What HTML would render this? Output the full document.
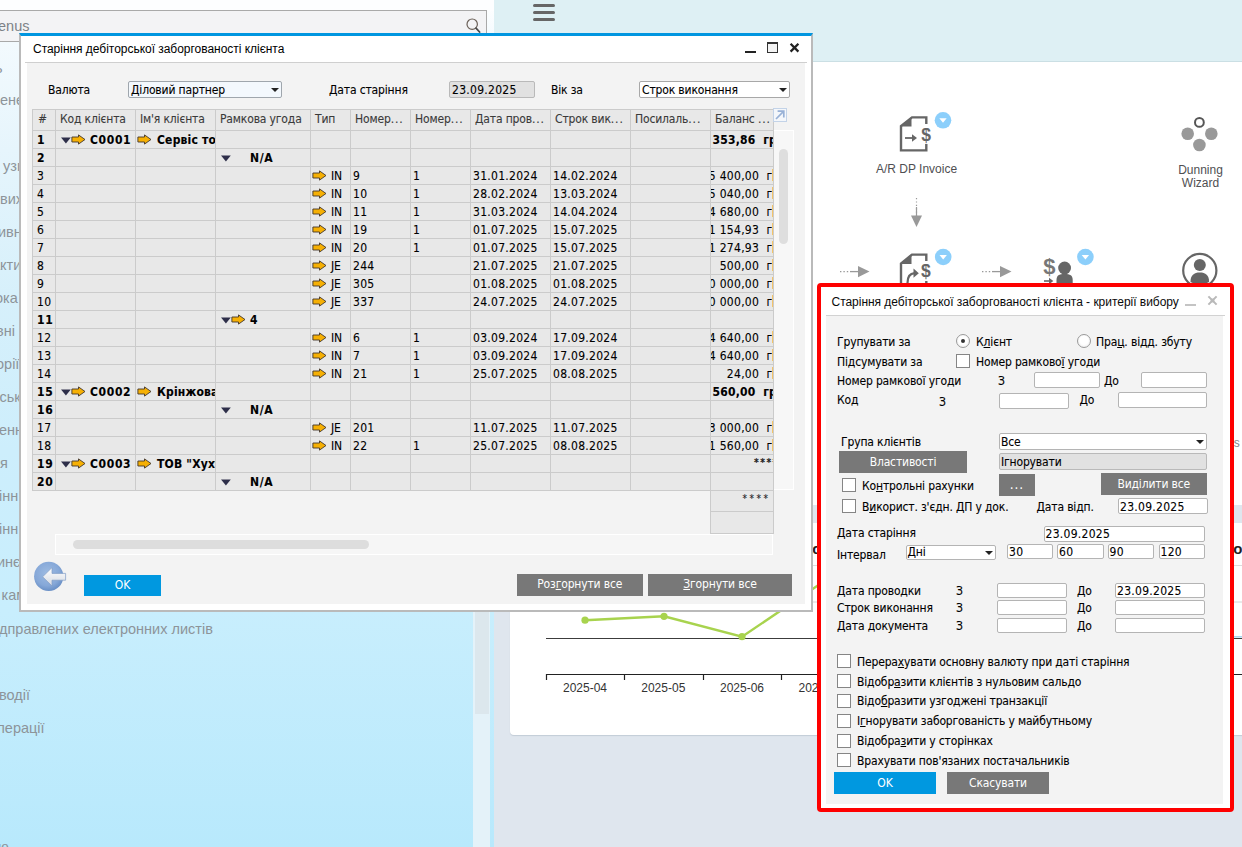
<!DOCTYPE html>
<html lang="uk">
<head>
<meta charset="utf-8">
<title>Старіння дебіторської заборгованості клієнта</title>
<style>
html,body{margin:0;padding:0;}
body{width:1242px;height:847px;position:relative;overflow:hidden;background:#dfe6ee;font-family:"DejaVu Sans Condensed","Liberation Sans",sans-serif;font-size:12px;color:#000;}
.abs,.abs *{position:absolute;box-sizing:border-box;}
.a{position:absolute;box-sizing:border-box;}
.t{position:absolute;white-space:nowrap;line-height:14px;font-size:12px;letter-spacing:-0.15px;-webkit-text-stroke:0.1px currentColor;}
.seg{font-family:"Liberation Sans",sans-serif;letter-spacing:-0.03px;-webkit-text-stroke:0 !important;color:#0a0a0a;}
.ari{font-family:"Liberation Sans",sans-serif;letter-spacing:0;}
u{text-decoration:underline;text-underline-offset:1px;}
/* left panel */
#left{left:0;top:0;width:494px;height:847px;background:linear-gradient(180deg,#ffffff 0px,#f3fafe 40px,#e6f5fc 150px,#d6f0fb 300px,#cdeefc 450px,#c8eefd 612px,#b8e9fc 847px);overflow:hidden;}
#left .mi{position:absolute;left:0;font-family:"Liberation Sans",sans-serif;font-size:14.5px;line-height:16px;color:#8d9499;white-space:nowrap;}
/* right panel */
#right{left:494px;top:0;width:748px;height:847px;background:#dfe6ee;overflow:hidden;}
/* dialogs */
.fld{position:absolute;box-sizing:border-box;background:#fff;border:1px solid #b4b4b4;border-radius:2px;font-size:12px;line-height:13px;padding:1.5px 0 0 2px;white-space:nowrap;overflow:hidden;-webkit-text-stroke:0.1px currentColor;letter-spacing:-0.15px;}
.fld.g{background:#e1e1e1;border-color:#b9b9b9;}
.btn{position:absolute;box-sizing:border-box;background:#787878;color:#fff;text-align:center;font-size:12px;line-height:21px;white-space:nowrap;letter-spacing:-0.15px;}
.btn.b{background:#0098e0;}
.cb{position:absolute;box-sizing:border-box;width:14px;height:14px;border:1px solid #858585;background:#fff;}
.rd{position:absolute;box-sizing:border-box;width:14px;height:14px;border:1px solid #9a9a9a;border-radius:50%;background:radial-gradient(circle at 50% 45%,#fff 45%,#e4e4e4 100%);}
.dd{position:absolute;width:0;height:0;border-left:4px solid transparent;border-right:4px solid transparent;border-top:4px solid #222;}

.c{background:#e8e8e8;overflow:hidden;}
.c .t{color:#000;}
.c .t.h{color:#3a3a3a;}
.bd{font-weight:bold;letter-spacing:0.2px;}
.n{letter-spacing:0.28px;}
.dots{letter-spacing:0.9px;}
.n2{letter-spacing:0.65px;}
</style>
</head>
<body>
<!-- LEFT PANEL -->
<div id="left" class="a">
<div class="a" style="left:0;top:0;width:494px;height:11px;background:#fdfeff"></div>
<div class="a" style="left:-5px;top:10px;width:492px;height:32px;background:#f3f3f5;border:1px solid #a9a9a9"></div>
<div class="a ari" style="left:-2px;top:17.5px;font-size:14.5px;line-height:16px;color:#7d8287;white-space:nowrap">enus</div>
<svg class="a" style="left:464px;top:15px" width="20" height="20" viewBox="0 0 20 20"><circle cx="8.2" cy="9.2" r="5.2" fill="none" stroke="#6b6058" stroke-width="1.2"/><path d="M12 13.2 L15.6 17" stroke="#4a4a4a" stroke-width="1.8" stroke-linecap="round"/></svg>
<div class="mi" style="left:-5px;top:60px;white-space:pre">ь</div>
<div class="mi" style="left:0px;top:92px;white-space:pre">ене</div>
<div class="mi" style="left:-1px;top:158px;white-space:pre"> узг</div>
<div class="mi" style="left:0px;top:191px;white-space:pre">вих</div>
<div class="mi" style="left:-2px;top:224px;white-space:pre">ивн</div>
<div class="mi" style="left:-8px;top:257px;white-space:pre">акти</div>
<div class="mi" style="left:-5px;top:290px;white-space:pre">ока</div>
<div class="mi" style="left:-4px;top:323px;white-space:pre">вні</div>
<div class="mi" style="left:-4px;top:356px;white-space:pre">орії</div>
<div class="mi" style="left:-0.5px;top:389px;white-space:pre">ськ</div>
<div class="mi" style="left:-1px;top:422px;white-space:pre">енн</div>
<div class="mi" style="left:0px;top:455px;white-space:pre">я</div>
<div class="mi" style="left:-1px;top:488px;white-space:pre">інн</div>
<div class="mi" style="left:-1px;top:521px;white-space:pre">інн</div>
<div class="mi" style="left:-3px;top:554px;white-space:pre">инє</div>
<div class="mi" style="left:-2.5px;top:587px;white-space:pre"> кам</div>
<div class="mi" style="left:-1px;top:621px;white-space:pre">дправлених електронних листів</div>
<div class="mi" style="left:-1px;top:687px;white-space:pre">водії</div>
<div class="mi" style="left:-3px;top:720px;white-space:pre">перації</div>
<div class="mi" style="left:-2px;top:839px;white-space:pre">ю</div>
<div class="a" style="left:473px;top:42px;width:17px;height:805px;background:#e4f2f9"></div>
<div class="a" style="left:475px;top:60px;width:13.5px;height:654px;background:#dce7ed"></div>
</div>
<!-- RIGHT PANEL -->
<div id="right" class="a">
<div class="a" style="left:0;top:0;width:748px;height:62px;background:#def0f4;border-bottom:1px solid #cbdfe4"></div>
<div class="a" style="left:39px;top:4px;width:22px;height:3px;border-radius:1.5px;background:#666"></div>
<div class="a" style="left:39px;top:11px;width:22px;height:3px;border-radius:1.5px;background:#666"></div>
<div class="a" style="left:39px;top:18px;width:22px;height:3px;border-radius:1.5px;background:#666"></div>
<div class="a" style="left:16px;top:62px;width:760px;height:442.5px;background:#fff;border-radius:0 0 4px 4px"></div>
<div class="a" style="left:16px;top:523px;width:760px;height:212px;background:#fff;border-radius:4px;box-shadow:0 1px 1px #c3ccd6"></div>
<!--R2-->
</div>
<!-- COCKPIT ICONS + CHART -->
<svg class="a" style="left:0;top:0" width="1242" height="847" viewBox="0 0 1242 847" font-family="Liberation Sans, sans-serif">
<!-- A/R DP Invoice icon -->
<g fill="none" stroke="#666" stroke-width="2.4">
<path d="M926.3 124 V117.4 H912 L901 126 V150.4 H926.3 V144"/>
</g>
<path d="M911.5 117 L911.5 126.5 L900.5 126.5 Z" fill="#666"/>
<path d="M905 138 H913" stroke="#666" stroke-width="1.8" fill="none"/>
<path d="M912 134.2 L917 138 L912 141.8 Z" fill="#666"/>
<text x="921.2" y="141" font-size="17.5" font-weight="bold" fill="#666">$</text>
<circle cx="943" cy="120.3" r="8.3" fill="#8ccffb"/>
<path d="M939.3 118.3 H946.7 L943 122.8 Z" fill="#fff"/>
<text x="916.5" y="172.6" font-size="12" fill="#4f4f52" text-anchor="middle">A/R DP Invoice</text>
<!-- down arrow -->
<path d="M916.5 198 V216" stroke="#999" stroke-width="1.2" stroke-dasharray="1.2 2.2" fill="none"/>
<path d="M916.5 207 V216" stroke="#999" stroke-width="1.2" fill="none"/>
<path d="M911 215.5 H922 L916.5 227 Z" fill="#999"/>
<!-- Dunning wizard -->
<circle cx="1199.4" cy="122.4" r="4.4" fill="#fff" stroke="#555" stroke-width="2"/>
<circle cx="1187.7" cy="133.7" r="6.3" fill="#999"/>
<circle cx="1211.3" cy="133.7" r="6.3" fill="#999"/>
<circle cx="1199.4" cy="145" r="6.3" fill="#999"/>
<text x="1200.5" y="173.5" font-size="12" fill="#4f4f52" text-anchor="middle">Dunning</text>
<text x="1200.5" y="186.9" font-size="12" fill="#4f4f52" text-anchor="middle">Wizard</text>
<!-- row 2 arrow 1 -->
<path d="M840 271.6 H850" stroke="#999" stroke-width="1.3" stroke-dasharray="1.4 2" fill="none"/>
<path d="M850 271.6 H859" stroke="#999" stroke-width="1.3" fill="none"/>
<path d="M858 266 L869.5 271.6 L858 277.2 Z" fill="#999"/>
<!-- doc icon 2 -->
<g fill="none" stroke="#666" stroke-width="2.4">
<path d="M926.3 261 V254.6 H912 L901 263.5 V290 M926.3 281 V290"/>
</g>
<path d="M911.5 254 L911.5 264 L900.5 264 Z" fill="#666"/>
<path d="M907.5 283 C907.5 277 910 273.5 914.5 273.2" stroke="#666" stroke-width="2.2" fill="none"/>
<path d="M913.5 268.6 L918.8 273.2 L913.5 277.8 Z" fill="#666"/>
<text x="921" y="277.4" font-size="17.5" font-weight="bold" fill="#666">$</text>
<circle cx="943.2" cy="257" r="8.3" fill="#8ccffb"/>
<path d="M939.5 255 H946.9 L943.2 259.5 Z" fill="#fff"/>
<!-- row 2 arrow 2 -->
<path d="M982 271.6 H992" stroke="#999" stroke-width="1.3" stroke-dasharray="1.4 2" fill="none"/>
<path d="M992 271.6 H1001" stroke="#999" stroke-width="1.3" fill="none"/>
<path d="M1000 266 L1011.5 271.6 L1000 277.2 Z" fill="#999"/>
<!-- $ person -->
<text x="1043.2" y="273.6" font-size="22" font-weight="bold" fill="#777">$</text>
<circle cx="1064.6" cy="268" r="6.4" fill="#666"/>
<path d="M1056.5 290 V280 C1056.5 275.5 1059 274 1064.6 274 C1070.2 274 1072.7 275.5 1072.7 280 V290 Z" fill="#666"/>
<path d="M1044 281 H1050" stroke="#666" stroke-width="1.6" fill="none"/>
<path d="M1049 277.8 L1053.3 281 L1049 284.2 Z" fill="#666"/>
<circle cx="1085.4" cy="257" r="8.3" fill="#8ccffb"/>
<path d="M1081.7 255 H1089.1 L1085.4 259.5 Z" fill="#fff"/>
<!-- person circle -->
<circle cx="1199.8" cy="270.5" r="16.6" fill="#fff" stroke="#666" stroke-width="2.2"/>
<circle cx="1199.8" cy="265" r="6" fill="#666"/>
<path d="M1190.5 282 C1190.5 275 1194 272.5 1199.8 272.5 C1205.6 272.5 1209.1 275 1209.1 282 C1206 284.5 1193.6 284.5 1190.5 282 Z" fill="#666"/>
<!-- fragments right of dialog -->
<text x="1233.8" y="446.5" font-size="12" fill="#7f8790">s</text>
<!-- chart card title -->
<text x="532" y="553.8" font-size="15" font-weight="bold" fill="#222">Аналіз продажів</text><text x="812.3" y="553.8" font-size="15" font-weight="bold" fill="#222">сума</text>
<text x="1233.2" y="553.8" font-size="15" font-weight="bold" fill="#222">о'</text>
<path d="M510 565.5 H1242" stroke="#dcdcdc" stroke-width="1"/>
<!-- chart -->
<path d="M546 602 H1242" stroke="#d4d4d4" stroke-width="1"/>
<path d="M546 638.5 H1242" stroke="#3c3c3c" stroke-width="1"/>
<path d="M1226 636.8 H1242" stroke="#9fd2ee" stroke-width="1.4"/>
<path d="M546 674.5 H1242" stroke="#222" stroke-width="1.2"/>
<path d="M546.5 674 V680 M624.5 674 V680 M703.5 674 V680 M781.5 674 V680" stroke="#222" stroke-width="1.2"/>
<g font-size="12" fill="#333" text-anchor="middle">
<text x="585" y="692">2025-04</text><text x="663.3" y="692">2025-05</text><text x="742" y="692">2025-06</text><text x="820.5" y="692">2025-07</text>
</g>
<path d="M585 620.2 L664 616.3 L742 636.7 L820 584" stroke="#a8d34e" stroke-width="2.4" fill="none"/>
<circle cx="585" cy="620.2" r="3.6" fill="#a8d34e"/><circle cx="664" cy="616.3" r="3.6" fill="#a8d34e"/><circle cx="742" cy="636.7" r="3.6" fill="#a8d34e"/>
</svg>
<!-- MAIN DIALOG -->
<div id="dlg1" class="a">
<div class="a" style="left:19px;top:33px;width:794px;height:579px;background:#fff;border:2px solid #bababa;border-top:3px solid #0096e0;"></div>
<div class="a" style="left:25px;top:62px;width:782px;height:1px;background:#cfcfcf"></div>
<div class="a" style="left:27px;top:63px;width:778px;height:541px;background:#f3f3f3"></div>
<div class="t seg" style="left:33px;top:41.5px;font-size:12px;color:#000">Старіння дебіторської заборгованості клієнта</div>
<div class="a" style="left:745px;top:51px;width:11px;height:2px;background:#222"></div>
<div class="a" style="left:767px;top:42px;width:11px;height:11px;border:1px solid #333;border-top:2px solid #333;background:#f3f3f3"></div>
<svg class="a" style="left:789px;top:42px" width="11" height="11" viewBox="0 0 11 11"><path d="M1.6 1.8 L9.4 9.6 M9.4 1.8 L1.6 9.6" stroke="#222" stroke-width="2.3" fill="none"/></svg>
<div class="t" style="left:48px;top:83px">Валюта</div>
<div class="fld" style="left:128px;top:81px;width:154px;height:16.6px;border-color:#9fa6ad;background:#f3f8fd">Діловий партнер</div><div class="dd" style="left:271px;top:88px"></div>
<div class="t" style="left:329px;top:83px">Дата старіння</div>
<div class="fld g" style="left:449px;top:81px;width:86px;height:16.6px"><span class="n">23.09.2025</span></div>
<div class="t" style="left:551px;top:83px">Вік за</div>
<div class="fld" style="left:639px;top:81px;width:151px;height:16.6px;border-color:#a8a8a8">Строк виконання</div><div class="dd" style="left:779px;top:88px"></div>
<div class="a" style="left:32px;top:109px;width:742px;height:382px;background:#cbcbcb"></div>
<div class="a c" style="left:33px;top:110px;width:22px;height:20px;"><span class="t h" style="left:5px;top:2px">#</span></div>
<div class="a c" style="left:56px;top:110px;width:79px;height:20px;"><span class="t h" style="left:4px;top:2px">Код клієнта</span></div>
<div class="a c" style="left:136px;top:110px;width:79px;height:20px;"><span class="t h" style="left:4px;top:2px">Ім'я клієнта</span></div>
<div class="a c" style="left:216px;top:110px;width:94px;height:20px;"><span class="t h" style="left:4px;top:2px">Рамкова угода</span></div>
<div class="a c" style="left:311px;top:110px;width:39px;height:20px;"><span class="t h" style="left:4px;top:2px">Тип</span></div>
<div class="a c" style="left:351px;top:110px;width:59px;height:20px;"><span class="t h" style="left:4px;top:2px">Номер<span class="dots">...</span></span></div>
<div class="a c" style="left:411px;top:110px;width:59px;height:20px;"><span class="t h" style="left:4px;top:2px">Номер<span class="dots">...</span></span></div>
<div class="a c" style="left:471px;top:110px;width:79px;height:20px;"><span class="t h" style="left:4px;top:2px">Дата пров<span class="dots">...</span></span></div>
<div class="a c" style="left:551px;top:110px;width:79px;height:20px;"><span class="t h" style="left:4px;top:2px">Строк вик<span class="dots">...</span></span></div>
<div class="a c" style="left:631px;top:110px;width:79px;height:20px;"><span class="t h" style="left:4px;top:2px">Посилаль<span class="dots">...</span></span></div>
<div class="a c" style="left:711px;top:110px;width:62px;height:20px;"><span class="t h" style="left:4px;top:2px">Баланс <span class="dots">...</span></span></div>
<div class="a c" style="left:33px;top:131px;width:22px;height:17px;"><span class="t bd n2" style="left:4px;top:1.5px">1</span></div>
<div class="a c" style="left:56px;top:131px;width:79px;height:17px;"><svg class="a" style="left:5px;top:6px" width="10" height="7" viewBox="0 0 10 7"><path d="M0 0.4 H9.8 L4.9 6.6 Z" fill="#2e2f4a"/></svg><svg class="a" style="left:15.2px;top:3px" width="15" height="11" viewBox="0 0 15 11"><path d="M0.9 3 H7.5 V0.9 L14 5.5 L7.5 10.1 V8 H0.9 Z" fill="#f6b004" stroke="#43372a" stroke-width="0.9" stroke-linejoin="miter"/></svg><span class="t bd n2" style="left:34px;top:1.5px">C0001</span></div>
<div class="a c" style="left:136px;top:131px;width:79px;height:17px;"><svg class="a" style="left:1px;top:3px" width="15" height="11" viewBox="0 0 15 11"><path d="M0.9 3 H7.5 V0.9 L14 5.5 L7.5 10.1 V8 H0.9 Z" fill="#f6b004" stroke="#43372a" stroke-width="0.9" stroke-linejoin="miter"/></svg><span class="t bd" style="left:21px;top:1.5px">Сервіс то</span></div>
<div class="a c" style="left:216px;top:131px;width:94px;height:17px;"></div>
<div class="a c" style="left:311px;top:131px;width:39px;height:17px;"></div>
<div class="a c" style="left:351px;top:131px;width:59px;height:17px;"></div>
<div class="a c" style="left:411px;top:131px;width:59px;height:17px;"></div>
<div class="a c" style="left:471px;top:131px;width:79px;height:17px;"></div>
<div class="a c" style="left:551px;top:131px;width:79px;height:17px;"></div>
<div class="a c" style="left:631px;top:131px;width:79px;height:17px;"></div>
<div class="a c" style="left:711px;top:131px;width:62px;height:17px;"><span class="t bd" style="left:1.5px;top:1.5px">353,86&nbsp;&nbsp;грн</span></div>
<div class="a c" style="left:33px;top:149px;width:22px;height:17px;"><span class="t bd n2" style="left:4px;top:1.5px">2</span></div>
<div class="a c" style="left:56px;top:149px;width:79px;height:17px;"></div>
<div class="a c" style="left:136px;top:149px;width:79px;height:17px;"></div>
<div class="a c" style="left:216px;top:149px;width:94px;height:17px;"><svg class="a" style="left:5px;top:6px" width="10" height="7" viewBox="0 0 10 7"><path d="M0 0.4 H9.8 L4.9 6.6 Z" fill="#2e2f4a"/></svg><span class="t bd n2" style="left:34px;top:1.5px">N/A</span></div>
<div class="a c" style="left:311px;top:149px;width:39px;height:17px;"></div>
<div class="a c" style="left:351px;top:149px;width:59px;height:17px;"></div>
<div class="a c" style="left:411px;top:149px;width:59px;height:17px;"></div>
<div class="a c" style="left:471px;top:149px;width:79px;height:17px;"></div>
<div class="a c" style="left:551px;top:149px;width:79px;height:17px;"></div>
<div class="a c" style="left:631px;top:149px;width:79px;height:17px;"></div>
<div class="a c" style="left:711px;top:149px;width:62px;height:17px;"></div>
<div class="a c" style="left:33px;top:167px;width:22px;height:17px;"><span class="t n" style="left:4px;top:1.5px">3</span></div>
<div class="a c" style="left:56px;top:167px;width:79px;height:17px;"></div>
<div class="a c" style="left:136px;top:167px;width:79px;height:17px;"></div>
<div class="a c" style="left:216px;top:167px;width:94px;height:17px;"></div>
<div class="a c" style="left:311px;top:167px;width:39px;height:17px;"><svg class="a" style="left:1px;top:3px" width="15" height="11" viewBox="0 0 15 11"><path d="M0.9 3 H7.5 V0.9 L14 5.5 L7.5 10.1 V8 H0.9 Z" fill="#f6b004" stroke="#43372a" stroke-width="0.9" stroke-linejoin="miter"/></svg><span class="t" style="left:20px;top:1.5px">IN</span></div>
<div class="a c" style="left:351px;top:167px;width:59px;height:17px;"><span class="t n" style="left:2px;top:1.5px">9</span></div>
<div class="a c" style="left:411px;top:167px;width:59px;height:17px;"><span class="t n" style="left:2px;top:1.5px">1</span></div>
<div class="a c" style="left:471px;top:167px;width:79px;height:17px;"><span class="t n" style="left:2px;top:1.5px">31.01.2024</span></div>
<div class="a c" style="left:551px;top:167px;width:79px;height:17px;"><span class="t n" style="left:2px;top:1.5px">14.02.2024</span></div>
<div class="a c" style="left:631px;top:167px;width:79px;height:17px;"></div>
<div class="a c" style="left:711px;top:167px;width:62px;height:17px;"><span class="t n" style="right:-14px;top:1.5px">15 400,00&nbsp;&nbsp;грн</span><span class="a" style="right:0;top:2px;width:1px;height:12px;background:#f3c46a"></span></div>
<div class="a c" style="left:33px;top:185px;width:22px;height:17px;"><span class="t n" style="left:4px;top:1.5px">4</span></div>
<div class="a c" style="left:56px;top:185px;width:79px;height:17px;"></div>
<div class="a c" style="left:136px;top:185px;width:79px;height:17px;"></div>
<div class="a c" style="left:216px;top:185px;width:94px;height:17px;"></div>
<div class="a c" style="left:311px;top:185px;width:39px;height:17px;"><svg class="a" style="left:1px;top:3px" width="15" height="11" viewBox="0 0 15 11"><path d="M0.9 3 H7.5 V0.9 L14 5.5 L7.5 10.1 V8 H0.9 Z" fill="#f6b004" stroke="#43372a" stroke-width="0.9" stroke-linejoin="miter"/></svg><span class="t" style="left:20px;top:1.5px">IN</span></div>
<div class="a c" style="left:351px;top:185px;width:59px;height:17px;"><span class="t n" style="left:2px;top:1.5px">10</span></div>
<div class="a c" style="left:411px;top:185px;width:59px;height:17px;"><span class="t n" style="left:2px;top:1.5px">1</span></div>
<div class="a c" style="left:471px;top:185px;width:79px;height:17px;"><span class="t n" style="left:2px;top:1.5px">28.02.2024</span></div>
<div class="a c" style="left:551px;top:185px;width:79px;height:17px;"><span class="t n" style="left:2px;top:1.5px">13.03.2024</span></div>
<div class="a c" style="left:631px;top:185px;width:79px;height:17px;"></div>
<div class="a c" style="left:711px;top:185px;width:62px;height:17px;"><span class="t n" style="right:-14px;top:1.5px">15 040,00&nbsp;&nbsp;грн</span><span class="a" style="right:0;top:2px;width:1px;height:12px;background:#f3c46a"></span></div>
<div class="a c" style="left:33px;top:203px;width:22px;height:17px;"><span class="t n" style="left:4px;top:1.5px">5</span></div>
<div class="a c" style="left:56px;top:203px;width:79px;height:17px;"></div>
<div class="a c" style="left:136px;top:203px;width:79px;height:17px;"></div>
<div class="a c" style="left:216px;top:203px;width:94px;height:17px;"></div>
<div class="a c" style="left:311px;top:203px;width:39px;height:17px;"><svg class="a" style="left:1px;top:3px" width="15" height="11" viewBox="0 0 15 11"><path d="M0.9 3 H7.5 V0.9 L14 5.5 L7.5 10.1 V8 H0.9 Z" fill="#f6b004" stroke="#43372a" stroke-width="0.9" stroke-linejoin="miter"/></svg><span class="t" style="left:20px;top:1.5px">IN</span></div>
<div class="a c" style="left:351px;top:203px;width:59px;height:17px;"><span class="t n" style="left:2px;top:1.5px">11</span></div>
<div class="a c" style="left:411px;top:203px;width:59px;height:17px;"><span class="t n" style="left:2px;top:1.5px">1</span></div>
<div class="a c" style="left:471px;top:203px;width:79px;height:17px;"><span class="t n" style="left:2px;top:1.5px">31.03.2024</span></div>
<div class="a c" style="left:551px;top:203px;width:79px;height:17px;"><span class="t n" style="left:2px;top:1.5px">14.04.2024</span></div>
<div class="a c" style="left:631px;top:203px;width:79px;height:17px;"></div>
<div class="a c" style="left:711px;top:203px;width:62px;height:17px;"><span class="t n" style="right:-14px;top:1.5px">14 680,00&nbsp;&nbsp;грн</span><span class="a" style="right:0;top:2px;width:1px;height:12px;background:#f3c46a"></span></div>
<div class="a c" style="left:33px;top:221px;width:22px;height:17px;"><span class="t n" style="left:4px;top:1.5px">6</span></div>
<div class="a c" style="left:56px;top:221px;width:79px;height:17px;"></div>
<div class="a c" style="left:136px;top:221px;width:79px;height:17px;"></div>
<div class="a c" style="left:216px;top:221px;width:94px;height:17px;"></div>
<div class="a c" style="left:311px;top:221px;width:39px;height:17px;"><svg class="a" style="left:1px;top:3px" width="15" height="11" viewBox="0 0 15 11"><path d="M0.9 3 H7.5 V0.9 L14 5.5 L7.5 10.1 V8 H0.9 Z" fill="#f6b004" stroke="#43372a" stroke-width="0.9" stroke-linejoin="miter"/></svg><span class="t" style="left:20px;top:1.5px">IN</span></div>
<div class="a c" style="left:351px;top:221px;width:59px;height:17px;"><span class="t n" style="left:2px;top:1.5px">19</span></div>
<div class="a c" style="left:411px;top:221px;width:59px;height:17px;"><span class="t n" style="left:2px;top:1.5px">1</span></div>
<div class="a c" style="left:471px;top:221px;width:79px;height:17px;"><span class="t n" style="left:2px;top:1.5px">01.07.2025</span></div>
<div class="a c" style="left:551px;top:221px;width:79px;height:17px;"><span class="t n" style="left:2px;top:1.5px">15.07.2025</span></div>
<div class="a c" style="left:631px;top:221px;width:79px;height:17px;"></div>
<div class="a c" style="left:711px;top:221px;width:62px;height:17px;"><span class="t n" style="right:-14px;top:1.5px">11 154,93&nbsp;&nbsp;грн</span><span class="a" style="right:0;top:2px;width:1px;height:12px;background:#f3c46a"></span></div>
<div class="a c" style="left:33px;top:239px;width:22px;height:17px;"><span class="t n" style="left:4px;top:1.5px">7</span></div>
<div class="a c" style="left:56px;top:239px;width:79px;height:17px;"></div>
<div class="a c" style="left:136px;top:239px;width:79px;height:17px;"></div>
<div class="a c" style="left:216px;top:239px;width:94px;height:17px;"></div>
<div class="a c" style="left:311px;top:239px;width:39px;height:17px;"><svg class="a" style="left:1px;top:3px" width="15" height="11" viewBox="0 0 15 11"><path d="M0.9 3 H7.5 V0.9 L14 5.5 L7.5 10.1 V8 H0.9 Z" fill="#f6b004" stroke="#43372a" stroke-width="0.9" stroke-linejoin="miter"/></svg><span class="t" style="left:20px;top:1.5px">IN</span></div>
<div class="a c" style="left:351px;top:239px;width:59px;height:17px;"><span class="t n" style="left:2px;top:1.5px">20</span></div>
<div class="a c" style="left:411px;top:239px;width:59px;height:17px;"><span class="t n" style="left:2px;top:1.5px">1</span></div>
<div class="a c" style="left:471px;top:239px;width:79px;height:17px;"><span class="t n" style="left:2px;top:1.5px">01.07.2025</span></div>
<div class="a c" style="left:551px;top:239px;width:79px;height:17px;"><span class="t n" style="left:2px;top:1.5px">15.07.2025</span></div>
<div class="a c" style="left:631px;top:239px;width:79px;height:17px;"></div>
<div class="a c" style="left:711px;top:239px;width:62px;height:17px;"><span class="t n" style="right:-14px;top:1.5px">11 274,93&nbsp;&nbsp;грн</span><span class="a" style="right:0;top:2px;width:1px;height:12px;background:#f3c46a"></span></div>
<div class="a c" style="left:33px;top:257px;width:22px;height:17px;"><span class="t n" style="left:4px;top:1.5px">8</span></div>
<div class="a c" style="left:56px;top:257px;width:79px;height:17px;"></div>
<div class="a c" style="left:136px;top:257px;width:79px;height:17px;"></div>
<div class="a c" style="left:216px;top:257px;width:94px;height:17px;"></div>
<div class="a c" style="left:311px;top:257px;width:39px;height:17px;"><svg class="a" style="left:1px;top:3px" width="15" height="11" viewBox="0 0 15 11"><path d="M0.9 3 H7.5 V0.9 L14 5.5 L7.5 10.1 V8 H0.9 Z" fill="#f6b004" stroke="#43372a" stroke-width="0.9" stroke-linejoin="miter"/></svg><span class="t" style="left:20px;top:1.5px">JE</span></div>
<div class="a c" style="left:351px;top:257px;width:59px;height:17px;"><span class="t n" style="left:2px;top:1.5px">244</span></div>
<div class="a c" style="left:411px;top:257px;width:59px;height:17px;"><span class="t" style="left:2px;top:1.5px"></span></div>
<div class="a c" style="left:471px;top:257px;width:79px;height:17px;"><span class="t n" style="left:2px;top:1.5px">21.07.2025</span></div>
<div class="a c" style="left:551px;top:257px;width:79px;height:17px;"><span class="t n" style="left:2px;top:1.5px">21.07.2025</span></div>
<div class="a c" style="left:631px;top:257px;width:79px;height:17px;"></div>
<div class="a c" style="left:711px;top:257px;width:62px;height:17px;"><span class="t n" style="right:-14px;top:1.5px">500,00&nbsp;&nbsp;грн</span><span class="a" style="right:0;top:2px;width:1px;height:12px;background:#f3c46a"></span></div>
<div class="a c" style="left:33px;top:275px;width:22px;height:17px;"><span class="t n" style="left:4px;top:1.5px">9</span></div>
<div class="a c" style="left:56px;top:275px;width:79px;height:17px;"></div>
<div class="a c" style="left:136px;top:275px;width:79px;height:17px;"></div>
<div class="a c" style="left:216px;top:275px;width:94px;height:17px;"></div>
<div class="a c" style="left:311px;top:275px;width:39px;height:17px;"><svg class="a" style="left:1px;top:3px" width="15" height="11" viewBox="0 0 15 11"><path d="M0.9 3 H7.5 V0.9 L14 5.5 L7.5 10.1 V8 H0.9 Z" fill="#f6b004" stroke="#43372a" stroke-width="0.9" stroke-linejoin="miter"/></svg><span class="t" style="left:20px;top:1.5px">JE</span></div>
<div class="a c" style="left:351px;top:275px;width:59px;height:17px;"><span class="t n" style="left:2px;top:1.5px">305</span></div>
<div class="a c" style="left:411px;top:275px;width:59px;height:17px;"><span class="t" style="left:2px;top:1.5px"></span></div>
<div class="a c" style="left:471px;top:275px;width:79px;height:17px;"><span class="t n" style="left:2px;top:1.5px">01.08.2025</span></div>
<div class="a c" style="left:551px;top:275px;width:79px;height:17px;"><span class="t n" style="left:2px;top:1.5px">01.08.2025</span></div>
<div class="a c" style="left:631px;top:275px;width:79px;height:17px;"></div>
<div class="a c" style="left:711px;top:275px;width:62px;height:17px;"><span class="t n" style="right:-14px;top:1.5px">10 000,00&nbsp;&nbsp;грн</span><span class="a" style="right:0;top:2px;width:1px;height:12px;background:#f3c46a"></span></div>
<div class="a c" style="left:33px;top:293px;width:22px;height:17px;"><span class="t n" style="left:4px;top:1.5px">10</span></div>
<div class="a c" style="left:56px;top:293px;width:79px;height:17px;"></div>
<div class="a c" style="left:136px;top:293px;width:79px;height:17px;"></div>
<div class="a c" style="left:216px;top:293px;width:94px;height:17px;"></div>
<div class="a c" style="left:311px;top:293px;width:39px;height:17px;"><svg class="a" style="left:1px;top:3px" width="15" height="11" viewBox="0 0 15 11"><path d="M0.9 3 H7.5 V0.9 L14 5.5 L7.5 10.1 V8 H0.9 Z" fill="#f6b004" stroke="#43372a" stroke-width="0.9" stroke-linejoin="miter"/></svg><span class="t" style="left:20px;top:1.5px">JE</span></div>
<div class="a c" style="left:351px;top:293px;width:59px;height:17px;"><span class="t n" style="left:2px;top:1.5px">337</span></div>
<div class="a c" style="left:411px;top:293px;width:59px;height:17px;"><span class="t" style="left:2px;top:1.5px"></span></div>
<div class="a c" style="left:471px;top:293px;width:79px;height:17px;"><span class="t n" style="left:2px;top:1.5px">24.07.2025</span></div>
<div class="a c" style="left:551px;top:293px;width:79px;height:17px;"><span class="t n" style="left:2px;top:1.5px">24.07.2025</span></div>
<div class="a c" style="left:631px;top:293px;width:79px;height:17px;"></div>
<div class="a c" style="left:711px;top:293px;width:62px;height:17px;"><span class="t n" style="right:-14px;top:1.5px">10 000,00&nbsp;&nbsp;грн</span><span class="a" style="right:0;top:2px;width:1px;height:12px;background:#f3c46a"></span></div>
<div class="a c" style="left:33px;top:311px;width:22px;height:17px;"><span class="t bd n2" style="left:4px;top:1.5px">11</span></div>
<div class="a c" style="left:56px;top:311px;width:79px;height:17px;"></div>
<div class="a c" style="left:136px;top:311px;width:79px;height:17px;"></div>
<div class="a c" style="left:216px;top:311px;width:94px;height:17px;"><svg class="a" style="left:5px;top:6px" width="10" height="7" viewBox="0 0 10 7"><path d="M0 0.4 H9.8 L4.9 6.6 Z" fill="#2e2f4a"/></svg><svg class="a" style="left:14.5px;top:3px" width="15" height="11" viewBox="0 0 15 11"><path d="M0.9 3 H7.5 V0.9 L14 5.5 L7.5 10.1 V8 H0.9 Z" fill="#f6b004" stroke="#43372a" stroke-width="0.9" stroke-linejoin="miter"/></svg><span class="t bd n2" style="left:34px;top:1.5px">4</span></div>
<div class="a c" style="left:311px;top:311px;width:39px;height:17px;"></div>
<div class="a c" style="left:351px;top:311px;width:59px;height:17px;"></div>
<div class="a c" style="left:411px;top:311px;width:59px;height:17px;"></div>
<div class="a c" style="left:471px;top:311px;width:79px;height:17px;"></div>
<div class="a c" style="left:551px;top:311px;width:79px;height:17px;"></div>
<div class="a c" style="left:631px;top:311px;width:79px;height:17px;"></div>
<div class="a c" style="left:711px;top:311px;width:62px;height:17px;"></div>
<div class="a c" style="left:33px;top:329px;width:22px;height:17px;"><span class="t n" style="left:4px;top:1.5px">12</span></div>
<div class="a c" style="left:56px;top:329px;width:79px;height:17px;"></div>
<div class="a c" style="left:136px;top:329px;width:79px;height:17px;"></div>
<div class="a c" style="left:216px;top:329px;width:94px;height:17px;"></div>
<div class="a c" style="left:311px;top:329px;width:39px;height:17px;"><svg class="a" style="left:1px;top:3px" width="15" height="11" viewBox="0 0 15 11"><path d="M0.9 3 H7.5 V0.9 L14 5.5 L7.5 10.1 V8 H0.9 Z" fill="#f6b004" stroke="#43372a" stroke-width="0.9" stroke-linejoin="miter"/></svg><span class="t" style="left:20px;top:1.5px">IN</span></div>
<div class="a c" style="left:351px;top:329px;width:59px;height:17px;"><span class="t n" style="left:2px;top:1.5px">6</span></div>
<div class="a c" style="left:411px;top:329px;width:59px;height:17px;"><span class="t n" style="left:2px;top:1.5px">1</span></div>
<div class="a c" style="left:471px;top:329px;width:79px;height:17px;"><span class="t n" style="left:2px;top:1.5px">03.09.2024</span></div>
<div class="a c" style="left:551px;top:329px;width:79px;height:17px;"><span class="t n" style="left:2px;top:1.5px">17.09.2024</span></div>
<div class="a c" style="left:631px;top:329px;width:79px;height:17px;"></div>
<div class="a c" style="left:711px;top:329px;width:62px;height:17px;"><span class="t n" style="right:-14px;top:1.5px">14 640,00&nbsp;&nbsp;грн</span><span class="a" style="right:0;top:2px;width:1px;height:12px;background:#f3c46a"></span></div>
<div class="a c" style="left:33px;top:347px;width:22px;height:17px;"><span class="t n" style="left:4px;top:1.5px">13</span></div>
<div class="a c" style="left:56px;top:347px;width:79px;height:17px;"></div>
<div class="a c" style="left:136px;top:347px;width:79px;height:17px;"></div>
<div class="a c" style="left:216px;top:347px;width:94px;height:17px;"></div>
<div class="a c" style="left:311px;top:347px;width:39px;height:17px;"><svg class="a" style="left:1px;top:3px" width="15" height="11" viewBox="0 0 15 11"><path d="M0.9 3 H7.5 V0.9 L14 5.5 L7.5 10.1 V8 H0.9 Z" fill="#f6b004" stroke="#43372a" stroke-width="0.9" stroke-linejoin="miter"/></svg><span class="t" style="left:20px;top:1.5px">IN</span></div>
<div class="a c" style="left:351px;top:347px;width:59px;height:17px;"><span class="t n" style="left:2px;top:1.5px">7</span></div>
<div class="a c" style="left:411px;top:347px;width:59px;height:17px;"><span class="t n" style="left:2px;top:1.5px">1</span></div>
<div class="a c" style="left:471px;top:347px;width:79px;height:17px;"><span class="t n" style="left:2px;top:1.5px">03.09.2024</span></div>
<div class="a c" style="left:551px;top:347px;width:79px;height:17px;"><span class="t n" style="left:2px;top:1.5px">17.09.2024</span></div>
<div class="a c" style="left:631px;top:347px;width:79px;height:17px;"></div>
<div class="a c" style="left:711px;top:347px;width:62px;height:17px;"><span class="t n" style="right:-14px;top:1.5px">14 640,00&nbsp;&nbsp;грн</span><span class="a" style="right:0;top:2px;width:1px;height:12px;background:#f3c46a"></span></div>
<div class="a c" style="left:33px;top:365px;width:22px;height:17px;"><span class="t n" style="left:4px;top:1.5px">14</span></div>
<div class="a c" style="left:56px;top:365px;width:79px;height:17px;"></div>
<div class="a c" style="left:136px;top:365px;width:79px;height:17px;"></div>
<div class="a c" style="left:216px;top:365px;width:94px;height:17px;"></div>
<div class="a c" style="left:311px;top:365px;width:39px;height:17px;"><svg class="a" style="left:1px;top:3px" width="15" height="11" viewBox="0 0 15 11"><path d="M0.9 3 H7.5 V0.9 L14 5.5 L7.5 10.1 V8 H0.9 Z" fill="#f6b004" stroke="#43372a" stroke-width="0.9" stroke-linejoin="miter"/></svg><span class="t" style="left:20px;top:1.5px">IN</span></div>
<div class="a c" style="left:351px;top:365px;width:59px;height:17px;"><span class="t n" style="left:2px;top:1.5px">21</span></div>
<div class="a c" style="left:411px;top:365px;width:59px;height:17px;"><span class="t n" style="left:2px;top:1.5px">1</span></div>
<div class="a c" style="left:471px;top:365px;width:79px;height:17px;"><span class="t n" style="left:2px;top:1.5px">25.07.2025</span></div>
<div class="a c" style="left:551px;top:365px;width:79px;height:17px;"><span class="t n" style="left:2px;top:1.5px">08.08.2025</span></div>
<div class="a c" style="left:631px;top:365px;width:79px;height:17px;"></div>
<div class="a c" style="left:711px;top:365px;width:62px;height:17px;"><span class="t n" style="right:-14px;top:1.5px">24,00&nbsp;&nbsp;грн</span><span class="a" style="right:0;top:2px;width:1px;height:12px;background:#f3c46a"></span></div>
<div class="a c" style="left:33px;top:383px;width:22px;height:17px;"><span class="t bd n2" style="left:4px;top:1.5px">15</span></div>
<div class="a c" style="left:56px;top:383px;width:79px;height:17px;"><svg class="a" style="left:5px;top:6px" width="10" height="7" viewBox="0 0 10 7"><path d="M0 0.4 H9.8 L4.9 6.6 Z" fill="#2e2f4a"/></svg><svg class="a" style="left:15.2px;top:3px" width="15" height="11" viewBox="0 0 15 11"><path d="M0.9 3 H7.5 V0.9 L14 5.5 L7.5 10.1 V8 H0.9 Z" fill="#f6b004" stroke="#43372a" stroke-width="0.9" stroke-linejoin="miter"/></svg><span class="t bd n2" style="left:34px;top:1.5px">C0002</span></div>
<div class="a c" style="left:136px;top:383px;width:79px;height:17px;"><svg class="a" style="left:1px;top:3px" width="15" height="11" viewBox="0 0 15 11"><path d="M0.9 3 H7.5 V0.9 L14 5.5 L7.5 10.1 V8 H0.9 Z" fill="#f6b004" stroke="#43372a" stroke-width="0.9" stroke-linejoin="miter"/></svg><span class="t bd" style="left:21px;top:1.5px">Крінжова</span></div>
<div class="a c" style="left:216px;top:383px;width:94px;height:17px;"></div>
<div class="a c" style="left:311px;top:383px;width:39px;height:17px;"></div>
<div class="a c" style="left:351px;top:383px;width:59px;height:17px;"></div>
<div class="a c" style="left:411px;top:383px;width:59px;height:17px;"></div>
<div class="a c" style="left:471px;top:383px;width:79px;height:17px;"></div>
<div class="a c" style="left:551px;top:383px;width:79px;height:17px;"></div>
<div class="a c" style="left:631px;top:383px;width:79px;height:17px;"></div>
<div class="a c" style="left:711px;top:383px;width:62px;height:17px;"><span class="t bd" style="left:1.5px;top:1.5px">560,00&nbsp;&nbsp;грн</span></div>
<div class="a c" style="left:33px;top:401px;width:22px;height:17px;"><span class="t bd n2" style="left:4px;top:1.5px">16</span></div>
<div class="a c" style="left:56px;top:401px;width:79px;height:17px;"></div>
<div class="a c" style="left:136px;top:401px;width:79px;height:17px;"></div>
<div class="a c" style="left:216px;top:401px;width:94px;height:17px;"><svg class="a" style="left:5px;top:6px" width="10" height="7" viewBox="0 0 10 7"><path d="M0 0.4 H9.8 L4.9 6.6 Z" fill="#2e2f4a"/></svg><span class="t bd n2" style="left:34px;top:1.5px">N/A</span></div>
<div class="a c" style="left:311px;top:401px;width:39px;height:17px;"></div>
<div class="a c" style="left:351px;top:401px;width:59px;height:17px;"></div>
<div class="a c" style="left:411px;top:401px;width:59px;height:17px;"></div>
<div class="a c" style="left:471px;top:401px;width:79px;height:17px;"></div>
<div class="a c" style="left:551px;top:401px;width:79px;height:17px;"></div>
<div class="a c" style="left:631px;top:401px;width:79px;height:17px;"></div>
<div class="a c" style="left:711px;top:401px;width:62px;height:17px;"></div>
<div class="a c" style="left:33px;top:419px;width:22px;height:17px;"><span class="t n" style="left:4px;top:1.5px">17</span></div>
<div class="a c" style="left:56px;top:419px;width:79px;height:17px;"></div>
<div class="a c" style="left:136px;top:419px;width:79px;height:17px;"></div>
<div class="a c" style="left:216px;top:419px;width:94px;height:17px;"></div>
<div class="a c" style="left:311px;top:419px;width:39px;height:17px;"><svg class="a" style="left:1px;top:3px" width="15" height="11" viewBox="0 0 15 11"><path d="M0.9 3 H7.5 V0.9 L14 5.5 L7.5 10.1 V8 H0.9 Z" fill="#f6b004" stroke="#43372a" stroke-width="0.9" stroke-linejoin="miter"/></svg><span class="t" style="left:20px;top:1.5px">JE</span></div>
<div class="a c" style="left:351px;top:419px;width:59px;height:17px;"><span class="t n" style="left:2px;top:1.5px">201</span></div>
<div class="a c" style="left:411px;top:419px;width:59px;height:17px;"><span class="t" style="left:2px;top:1.5px"></span></div>
<div class="a c" style="left:471px;top:419px;width:79px;height:17px;"><span class="t n" style="left:2px;top:1.5px">11.07.2025</span></div>
<div class="a c" style="left:551px;top:419px;width:79px;height:17px;"><span class="t n" style="left:2px;top:1.5px">11.07.2025</span></div>
<div class="a c" style="left:631px;top:419px;width:79px;height:17px;"></div>
<div class="a c" style="left:711px;top:419px;width:62px;height:17px;"><span class="t n" style="right:-14px;top:1.5px">3 000,00&nbsp;&nbsp;грн</span><span class="a" style="right:0;top:2px;width:1px;height:12px;background:#f3c46a"></span></div>
<div class="a c" style="left:33px;top:437px;width:22px;height:17px;"><span class="t n" style="left:4px;top:1.5px">18</span></div>
<div class="a c" style="left:56px;top:437px;width:79px;height:17px;"></div>
<div class="a c" style="left:136px;top:437px;width:79px;height:17px;"></div>
<div class="a c" style="left:216px;top:437px;width:94px;height:17px;"></div>
<div class="a c" style="left:311px;top:437px;width:39px;height:17px;"><svg class="a" style="left:1px;top:3px" width="15" height="11" viewBox="0 0 15 11"><path d="M0.9 3 H7.5 V0.9 L14 5.5 L7.5 10.1 V8 H0.9 Z" fill="#f6b004" stroke="#43372a" stroke-width="0.9" stroke-linejoin="miter"/></svg><span class="t" style="left:20px;top:1.5px">IN</span></div>
<div class="a c" style="left:351px;top:437px;width:59px;height:17px;"><span class="t n" style="left:2px;top:1.5px">22</span></div>
<div class="a c" style="left:411px;top:437px;width:59px;height:17px;"><span class="t n" style="left:2px;top:1.5px">1</span></div>
<div class="a c" style="left:471px;top:437px;width:79px;height:17px;"><span class="t n" style="left:2px;top:1.5px">25.07.2025</span></div>
<div class="a c" style="left:551px;top:437px;width:79px;height:17px;"><span class="t n" style="left:2px;top:1.5px">08.08.2025</span></div>
<div class="a c" style="left:631px;top:437px;width:79px;height:17px;"></div>
<div class="a c" style="left:711px;top:437px;width:62px;height:17px;"><span class="t n" style="right:-14px;top:1.5px">1 560,00&nbsp;&nbsp;грн</span><span class="a" style="right:0;top:2px;width:1px;height:12px;background:#f3c46a"></span></div>
<div class="a c" style="left:33px;top:455px;width:22px;height:17px;"><span class="t bd n2" style="left:4px;top:1.5px">19</span></div>
<div class="a c" style="left:56px;top:455px;width:79px;height:17px;"><svg class="a" style="left:5px;top:6px" width="10" height="7" viewBox="0 0 10 7"><path d="M0 0.4 H9.8 L4.9 6.6 Z" fill="#2e2f4a"/></svg><svg class="a" style="left:15.2px;top:3px" width="15" height="11" viewBox="0 0 15 11"><path d="M0.9 3 H7.5 V0.9 L14 5.5 L7.5 10.1 V8 H0.9 Z" fill="#f6b004" stroke="#43372a" stroke-width="0.9" stroke-linejoin="miter"/></svg><span class="t bd n2" style="left:34px;top:1.5px">C0003</span></div>
<div class="a c" style="left:136px;top:455px;width:79px;height:17px;"><svg class="a" style="left:1px;top:3px" width="15" height="11" viewBox="0 0 15 11"><path d="M0.9 3 H7.5 V0.9 L14 5.5 L7.5 10.1 V8 H0.9 Z" fill="#f6b004" stroke="#43372a" stroke-width="0.9" stroke-linejoin="miter"/></svg><span class="t bd" style="left:21px;top:1.5px">ТОВ "Хухт</span></div>
<div class="a c" style="left:216px;top:455px;width:94px;height:17px;"></div>
<div class="a c" style="left:311px;top:455px;width:39px;height:17px;"></div>
<div class="a c" style="left:351px;top:455px;width:59px;height:17px;"></div>
<div class="a c" style="left:411px;top:455px;width:59px;height:17px;"></div>
<div class="a c" style="left:471px;top:455px;width:79px;height:17px;"></div>
<div class="a c" style="left:551px;top:455px;width:79px;height:17px;"></div>
<div class="a c" style="left:631px;top:455px;width:79px;height:17px;"></div>
<div class="a c" style="left:711px;top:455px;width:62px;height:17px;"><span class="t" style="left:43px;top:1.2px;font-size:10px;font-weight:bold;letter-spacing:1.5px;color:#222">*****</span></div>
<div class="a c" style="left:33px;top:473px;width:22px;height:17px;"><span class="t bd n2" style="left:4px;top:1.5px">20</span></div>
<div class="a c" style="left:56px;top:473px;width:79px;height:17px;"></div>
<div class="a c" style="left:136px;top:473px;width:79px;height:17px;"></div>
<div class="a c" style="left:216px;top:473px;width:94px;height:17px;"><svg class="a" style="left:5px;top:6px" width="10" height="7" viewBox="0 0 10 7"><path d="M0 0.4 H9.8 L4.9 6.6 Z" fill="#2e2f4a"/></svg><span class="t bd n2" style="left:34px;top:1.5px">N/A</span></div>
<div class="a c" style="left:311px;top:473px;width:39px;height:17px;"></div>
<div class="a c" style="left:351px;top:473px;width:59px;height:17px;"></div>
<div class="a c" style="left:411px;top:473px;width:59px;height:17px;"></div>
<div class="a c" style="left:471px;top:473px;width:79px;height:17px;"></div>
<div class="a c" style="left:551px;top:473px;width:79px;height:17px;"></div>
<div class="a c" style="left:631px;top:473px;width:79px;height:17px;"></div>
<div class="a c" style="left:711px;top:473px;width:62px;height:17px;"></div>
<svg class="a" style="left:773px;top:108px" width="14" height="14" viewBox="0 0 14 14"><rect x="0.5" y="0.5" width="13" height="13" fill="#f4f7fb" stroke="#c3d3e8"/><path d="M3 11 L10.3 3.7 M4.6 3.2 H10.8 V9.4" stroke="#98b1d6" stroke-width="1.7" fill="none"/></svg>
<div class="a" style="left:774px;top:130px;width:20px;height:360px;background:#f7f7f7;border:1px solid #fff;border-left:0"></div>
<div class="a" style="left:778.5px;top:149px;width:9.5px;height:95px;border-radius:5px;background:#dedede"></div>
<div class="a" style="left:710px;top:490px;width:64px;height:44px;background:#cbcbcb"></div>
<div class="a c" style="left:711px;top:491px;width:62px;height:20px"><span class="t" style="left:31.5px;top:1.2px;font-size:10px;letter-spacing:2.5px;color:#222">****</span></div>
<div class="a c" style="left:711px;top:512px;width:62px;height:21px"></div>
<div class="a" style="left:55px;top:534px;width:718px;height:20.5px;background:#f6f6f6;border:1px solid #fff"></div>
<div class="a" style="left:73px;top:540px;width:296px;height:8.5px;border-radius:4.5px;background:#dddddd"></div>
<svg class="a" style="left:32px;top:560px" width="36" height="33" viewBox="0 0 36 33"><defs><radialGradient id="bg1" cx="45%" cy="40%" r="60%"><stop offset="0" stop-color="#9dbbe2"/><stop offset="0.7" stop-color="#86a8d8"/><stop offset="1" stop-color="#6a90c6"/></radialGradient><linearGradient id="ag1" x1="0" y1="0" x2="0" y2="1"><stop offset="0" stop-color="#ffffff"/><stop offset="1" stop-color="#d4d9e2"/></linearGradient></defs><circle cx="16.7" cy="16.4" r="14.6" fill="url(#bg1)"/><path d="M10.6 16.8 L20 7.6 V13.4 H33.6 V20.2 H20 V26 Z" fill="url(#ag1)" stroke="#7f9cc6" stroke-width="0.7"/></svg>
<div class="btn b" style="left:84px;top:575px;width:77px;height:21px;line-height:20px">OK</div>
<div class="btn" style="left:517px;top:574px;width:125.5px;height:22px">Роз<u>г</u>орнути все</div>
<div class="btn" style="left:648px;top:574px;width:144px;height:22px"><u>З</u>горнути все</div>
</div>
<!-- SECOND DIALOG -->
<div id="dlg2" class="a">
<div class="a" style="left:817.1px;top:283.1px;width:416.6px;height:528.6px;border:4.7px solid #fe0000;border-radius:4px;background:#fff"></div>
<div class="a" style="left:826px;top:315px;width:399px;height:1px;background:#d2d2d2"></div>
<div class="a" style="left:826px;top:316px;width:397px;height:488px;background:#f3f3f3"></div>
<div class="t seg" style="left:831.5px;top:294.5px;font-size:12px">Старіння дебіторської заборгованості клієнта - критерії вибору</div>
<div class="a" style="left:1185px;top:304px;width:11px;height:2px;background:#c4c4c4"></div>
<svg class="a" style="left:1207px;top:295px" width="11" height="11" viewBox="0 0 11 11"><path d="M1.4 1.4 L9.6 9.6 M9.6 1.4 L1.4 9.6" stroke="#b9b9b9" stroke-width="2" fill="none"/><rect x="3.6" y="3.6" width="3.8" height="3.8" fill="#b9b9b9"/></svg>
<div class="t" style="left:837px;top:335px;">Групувати за</div>
<div class="rd" style="left:956px;top:334px"></div><div class="a" style="left:961px;top:339px;width:4px;height:4px;border-radius:50%;background:#333"></div>
<div class="t" style="left:976px;top:335px;">К<u>л</u>ієнт</div>
<div class="rd" style="left:1076.5px;top:334px"></div>
<div class="t" style="left:1096px;top:335px;">Пра<u>ц</u>. відд. збуту</div>
<div class="t" style="left:837px;top:355px;">Підсумувати за</div>
<div class="cb" style="left:956px;top:354px"></div>
<div class="t" style="left:976px;top:355px;">Номер рамково<u>ї</u> угоди</div>
<div class="t" style="left:837px;top:374px;">Номер рамкової угоди</div>
<div class="t" style="left:998px;top:374px;">З</div>
<div class="fld" style="left:1034px;top:372px;width:65.5px;height:15.5px;line-height:11px;padding:0.9px 0 0 1px"></div>
<div class="t" style="left:1104px;top:374px;">До</div>
<div class="fld" style="left:1141px;top:372px;width:65.5px;height:15.5px;line-height:11px;padding:0.9px 0 0 1px"></div>
<div class="t" style="left:837px;top:393px;">Код</div>
<div class="t" style="left:939px;top:395px;">З</div>
<div class="fld" style="left:999px;top:393px;width:70px;height:15.5px;line-height:11px;padding:0.9px 0 0 1px"></div>
<div class="t" style="left:1079.5px;top:393px;">До</div>
<div class="fld" style="left:1117.5px;top:391.5px;width:89.0px;height:16.0px;line-height:11px;padding:0.9px 0 0 1px"></div>
<div class="t" style="left:841px;top:434.6px;">Група клієнтів</div>
<div class="fld" style="left:999px;top:433px;width:207.7px;height:16.5px;line-height:11px;padding:2.9px 0 0 1px">Все</div><div class="dd" style="left:1196px;top:440px"></div>
<div class="btn" style="left:839px;top:451px;width:128px;height:21.5px;line-height:22.6px">Властивості</div>
<div class="fld g" style="left:999px;top:453px;width:207.7px;height:16.5px;line-height:11px;padding:2.6px 0 0 1px">Ігнорувати</div>
<div class="cb" style="left:842px;top:478px"></div>
<div class="t" style="left:862px;top:478.7px;">Ко<u>н</u>трольні рахунки</div>
<div class="btn" style="left:999px;top:474px;width:36px;height:21.7px;line-height:21px;font-size:13.5px"><span class="dots">...</span></div>
<div class="btn" style="left:1101px;top:473px;width:105.5px;height:22px;line-height:23.5px">Виділити все</div>
<div class="cb" style="left:842px;top:499px"></div>
<div class="t" style="left:862px;top:499.6px;">В<u>и</u>корист. з'єдн. ДП у док.</div>
<div class="t" style="left:1036.5px;top:499.6px;">Дата відп.</div>
<div class="fld" style="left:1118px;top:498px;width:89.5px;height:15.5px;line-height:11px;padding:2.6px 0 0 1px"><span class="n">23.09.2025</span></div>
<div class="t" style="left:837px;top:525.7px;">Дата старіння</div>
<div class="fld" style="left:1043.5px;top:526px;width:161.5px;height:15.5px;line-height:11px;padding:2.2px 0 0 1px"><span class="n">23.09.2025</span></div>
<div class="t" style="left:837px;top:548.2px;">Інтервал</div>
<div class="fld" style="left:905.5px;top:544.5px;width:90.5px;height:15.5px;line-height:11px;padding:1.2px 0 0 1px">Дні</div><div class="dd" style="left:985px;top:551px"></div>
<div class="fld" style="left:1007px;top:544px;width:45.5px;height:15px;line-height:11px;padding:1.5px 0 0 1px"><span class="n">30</span></div>
<div class="fld" style="left:1057px;top:544px;width:46.5px;height:15px;line-height:11px;padding:1.5px 0 0 1px"><span class="n">60</span></div>
<div class="fld" style="left:1107.5px;top:544px;width:46.0px;height:15px;line-height:11px;padding:1.5px 0 0 1px"><span class="n">90</span></div>
<div class="fld" style="left:1158.5px;top:544px;width:46.5px;height:15px;line-height:11px;padding:1.5px 0 0 1px"><span class="n">120</span></div>
<div class="t" style="left:837px;top:584.2px;">Дата проводки</div>
<div class="t" style="left:956px;top:584.2px;">З</div>
<div class="fld" style="left:997px;top:582.7px;width:69.7px;height:14.9px;line-height:11px;padding:0.9px 0 0 1px"></div>
<div class="t" style="left:1077px;top:584.2px;">До</div>
<div class="fld" style="left:1115px;top:582.7px;width:90px;height:14.9px;line-height:11px;padding:2.6px 0 0 1px"><span class="n">23.09.2025</span></div>
<div class="t" style="left:837px;top:600.5px;">Строк виконання</div>
<div class="t" style="left:956px;top:600.5px;">З</div>
<div class="fld" style="left:997px;top:600.4px;width:69.7px;height:14.4px;line-height:11px;padding:0.9px 0 0 1px"></div>
<div class="t" style="left:1077px;top:600.5px;">До</div>
<div class="fld" style="left:1115px;top:600.4px;width:90px;height:14.4px;line-height:11px;padding:1.2px 0 0 1px"></div>
<div class="t" style="left:837px;top:618.6px;">Дата документа</div>
<div class="t" style="left:956px;top:618.6px;">З</div>
<div class="fld" style="left:997px;top:618.2px;width:69.7px;height:14.4px;line-height:11px;padding:0.9px 0 0 1px"></div>
<div class="t" style="left:1077px;top:618.6px;">До</div>
<div class="fld" style="left:1115px;top:618.2px;width:90px;height:14.4px;line-height:11px;padding:1.5px 0 0 1px"></div>
<div class="cb" style="left:837px;top:654.4px"></div>
<div class="t" style="left:857px;top:654.7px;">Перера<u>х</u>увати основну валюту при даті старіння</div>
<div class="cb" style="left:837px;top:674.2px"></div>
<div class="t" style="left:857px;top:674.5px;">Відобр<u>а</u>зити клієнтів з нульовим сальдо</div>
<div class="cb" style="left:837px;top:694.0px"></div>
<div class="t" style="left:857px;top:694.3px;">Відо<u>б</u>разити узгоджені транзакції</div>
<div class="cb" style="left:837px;top:713.8px"></div>
<div class="t" style="left:857px;top:714.1px;">І<u>г</u>норувати заборгованість у майбутньому</div>
<div class="cb" style="left:837px;top:733.6px"></div>
<div class="t" style="left:857px;top:733.9px;">Відобра<u>з</u>ити у сторінках</div>
<div class="cb" style="left:837px;top:753.4px"></div>
<div class="t" style="left:857px;top:753.7px;">Врахувати пов'язаних постачальників</div>
<div class="btn b" style="left:834px;top:772px;width:102px;height:22px;line-height:23px">OK</div>
<div class="btn" style="left:947px;top:772px;width:102px;height:22px;line-height:23px">Скасувати</div>
</div>
</body>
</html>
